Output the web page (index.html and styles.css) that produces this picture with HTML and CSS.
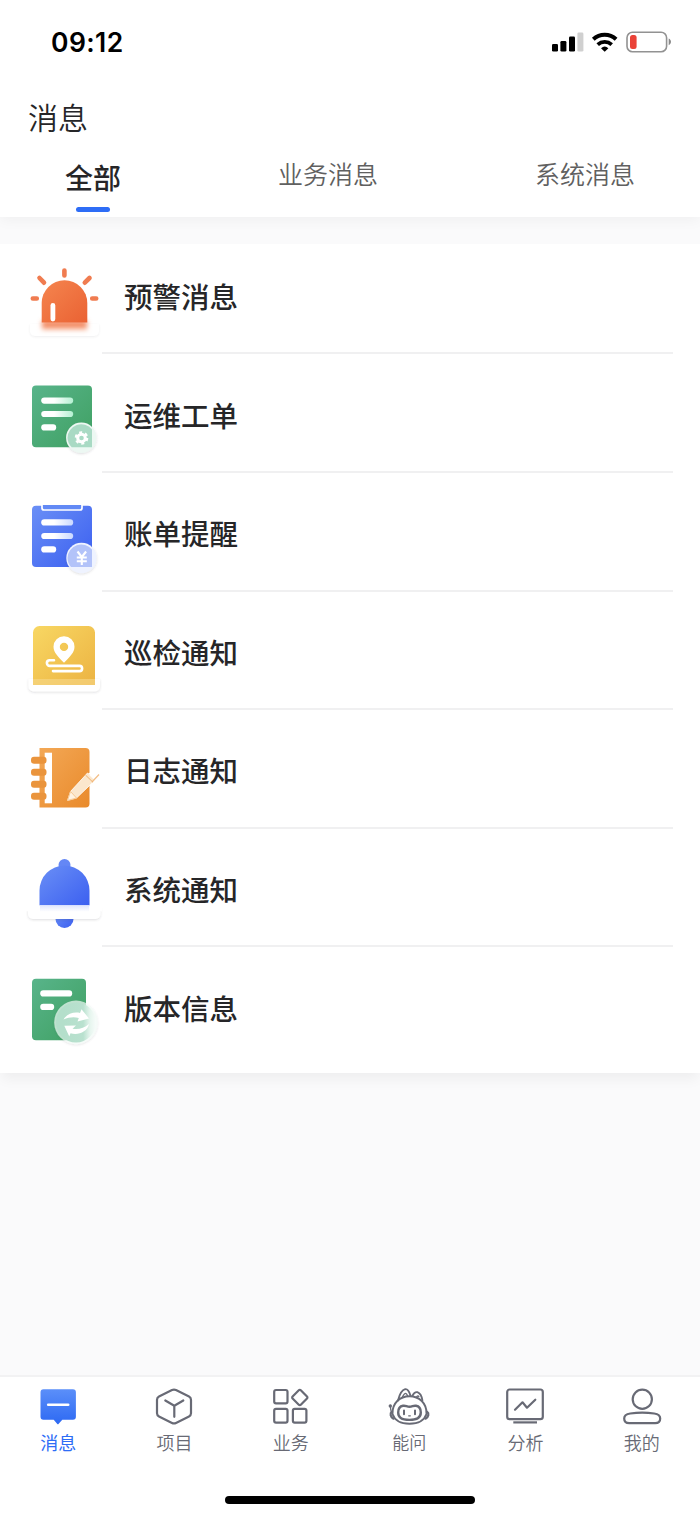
FILE: index.html
```
<!DOCTYPE html>
<html lang="zh-CN">
<head>
  <meta charset="UTF-8" />
  <meta name="viewport" content="width=device-width, initial-scale=1.0"/>
  <title>消息</title>
  <link rel="stylesheet" href="styles.css">
</head>
<body>
  <!-- shared gradients -->
  <svg class="defs" width="0" height="0">
    <defs>
      <linearGradient id="red" x1="0" y1="0" x2="1" y2="1"><stop offset="0" stop-color="#f5854f"/><stop offset="1" stop-color="#ea6233"/></linearGradient>
      <linearGradient id="green" x1="0" y1="0" x2="1" y2="1"><stop offset="0" stop-color="#58b48a"/><stop offset="1" stop-color="#3fa062"/></linearGradient>
      <linearGradient id="blue" x1="0" y1="0" x2="1" y2="1"><stop offset="0" stop-color="#6a8ff6"/><stop offset="1" stop-color="#3b5ff0"/></linearGradient>
      <linearGradient id="yellow" x1="0" y1="0" x2="1" y2="1"><stop offset="0" stop-color="#f8d763"/><stop offset="1" stop-color="#ecb342"/></linearGradient>
      <linearGradient id="orange" x1="0" y1="0" x2="1" y2="1"><stop offset="0" stop-color="#f3a856"/><stop offset="1" stop-color="#e98a2b"/></linearGradient>
      <linearGradient id="lineGreen"><stop offset=".4" stop-color="#fff"/><stop offset="1" stop-color="#b4f0d2"/></linearGradient>
      <linearGradient id="lineBlue"><stop offset=".4" stop-color="#fff"/><stop offset="1" stop-color="#c9d8ff"/></linearGradient>
      <linearGradient id="chat" x1="0" y1="0" x2="0" y2="1"><stop offset="0" stop-color="#5b8ff9"/><stop offset="1" stop-color="#2d69f3"/></linearGradient>
      <linearGradient id="glow" x1="0" y1="0" x2="0" y2="1"><stop offset="0" stop-color="#ee6c3c"/><stop offset="1" stop-color="#f8b090"/></linearGradient>
      <linearGradient id="fade" x1="0" y1="0" x2="0" y2="1"><stop offset="0" stop-color="#dfe5fd"/><stop offset="1" stop-color="#fff"/></linearGradient>
      <linearGradient id="glass"><stop offset=".2" stop-color="#b4dfcb"/><stop offset=".68" stop-color="#b9e1cf"/><stop offset=".85" stop-color="#e6f5ee"/><stop offset="1" stop-color="#f7fcfa"/></linearGradient>
      <filter id="soft" x="-30%" y="-80%" width="160%" height="260%"><feGaussianBlur stdDeviation="2.4"/></filter>
      <filter id="shadow" x="-30%" y="-30%" width="160%" height="180%"><feDropShadow dx="0" dy="1" stdDeviation="1.2" flood-color="#445" flood-opacity=".18"/></filter>
    </defs>
  </svg>

  <header class="header">
    <div class="status">
      <span class="time">09:12</span>
      <svg class="status-icons" width="120" height="24" viewBox="0 0 120 24">
        <rect x="0" y="14" width="6" height="7.5" rx="1.3"/>
        <rect x="8.4" y="11" width="6" height="10.5" rx="1.3"/>
        <rect x="17" y="6.5" width="6" height="15" rx="1.3"/>
        <rect x="25.4" y="2.5" width="6" height="19" rx="1.3" fill="#d0d0d0"/>
        <g fill="none" stroke="#000" stroke-width="4">
          <path d="M41.300 9.200a16.800 16.800 0 0 1 22.800 0"/>
          <path d="M45.700 14.600a10.600 10.600 0 0 1 14 0" stroke-width="3.8"/>
        </g>
        <path d="M49 18.200a5.600 5.600 0 0 1 7.400 0l-3.700 3.600z"/>
        <rect x="75" y="2.200" width="39.600" height="19.600" rx="5.500" fill="none" stroke="#929292" stroke-width="1.600"/>
        <rect x="78" y="5" width="6.600" height="14" rx="2.500" fill="#ea4238"/>
        <path d="M116.700 8.600c3 1.200 3 5.500 0 6.700z" fill="#888"/>
      </svg>
    </div>
    <h1 class="title">消息</h1>
    <nav class="tabs">
      <a class="tab active">全部</a>
      <a class="tab">业务消息</a>
      <a class="tab">系统消息</a>
    </nav>
  </header>

  <main class="list">
    <div class="item">
      <svg class="icon" viewBox="0 0 80 90">
        <g stroke="#f07c50" stroke-width="4.6" stroke-linecap="round">
          <path d="M40.400 18.500v5M15.500 26l4.500 4.700M65.500 26l-4.700 4.700M8.800 46.500h4M68.200 46.500h4"/>
        </g>
        <path d="M6 72h69v7a5 5 0 0 1-5 5H11a5 5 0 0 1-5-5z" fill="#fff" filter="url(#shadow)" opacity=".5"/>
        <rect x="18" y="69" width="45" height="8.500" fill="url(#glow)" filter="url(#soft)"/>
        <path d="M17.700 70.600V51a22.800 22.800 0 0 1 45.600 0v19.600z" fill="url(#red)"/>
        <rect x="26.500" y="51" width="4.800" height="18.500" rx="2.400" fill="#fff"/>
      </svg>
      <span class="label">预警消息</span>
    </div>
    <div class="item">
      <svg class="icon" viewBox="0 0 80 90">
        <rect x="8" y="14.500" width="60" height="61.800" rx="4" fill="url(#green)"/>
        <rect x="17.200" y="26.500" width="32" height="6.200" rx="3.100" fill="url(#lineGreen)"/>
        <rect x="17.200" y="39.900" width="32" height="6.200" rx="3.100" fill="url(#lineGreen)"/>
        <rect x="17.200" y="53.300" width="15" height="6.200" rx="3.100" fill="#fff"/>
        <circle cx="57.300" cy="66.800" r="15.200" fill="#edf8f3" filter="url(#shadow)"/>
        <path d="M43.500 66.800a13.800 13.800 0 0 1 24.500-8.500v18H47.700a13.800 13.800 0 0 1-4.200-9.500z" fill="#a9dac4"/>
        <g fill="none" stroke="#fff">
          <circle cx="57.500" cy="67" r="3.800" stroke-width="3"/>
          <circle cx="57.500" cy="67" r="5.600" stroke-width="2.400" stroke-dasharray="2.930"/>
        </g>
      </svg>
      <span class="label">运维工单</span>
    </div>
    <div class="item">
      <svg class="icon" viewBox="0 0 80 90">
        <rect x="8" y="16.700" width="60" height="61.300" rx="4" fill="url(#blue)"/>
        <path d="M18 16v3a2 2 0 0 0 2 2h36a2 2 0 0 0 2-2v-3" fill="#6289f5" stroke="#fff" stroke-width="1.700"/>
        <rect x="17.200" y="30.300" width="32" height="6.200" rx="3.100" fill="url(#lineBlue)"/>
        <rect x="17.200" y="43.900" width="32" height="6.200" rx="3.100" fill="url(#lineBlue)"/>
        <rect x="17.200" y="57.300" width="15" height="6.200" rx="3.100" fill="#fff"/>
        <circle cx="57.500" cy="69" r="15.200" fill="#eff3ff" filter="url(#shadow)"/>
        <path d="M43.500 69a13.800 13.800 0 0 1 24.500-8.500V78H47a13.800 13.800 0 0 1-3.500-9z" fill="#b3c3f9"/>
        <path d="M53.500 62.500l4.300 5.500 4.300-5.500M57.800 68v8M52.800 68.500h10M52.800 72.300h10" fill="none" stroke="#fff" stroke-width="2.100"/>
      </svg>
      <span class="label">账单提醒</span>
    </div>
    <div class="item">
      <svg class="icon" viewBox="0 0 80 90">
        <path d="M4.500 71H76v7.500a5 5 0 0 1-5 5H9.500a5 5 0 0 1-5-5z" fill="#fff" filter="url(#shadow)"/>
        <path d="M9 77V24.500a6.500 6.500 0 0 1 6.500-6.500h49a6.500 6.500 0 0 1 6.500 6.500V77z" fill="url(#yellow)"/>
        <rect x="9" y="71" width="62" height="6" fill="#f7d88c" opacity=".6"/>
        <path fill="#fff" fill-rule="evenodd" d="M40 28.200a10.500 10.500 0 0 1 10.500 10.500c0 6-5 10.300-10.500 16-5.500-5.700-10.500-10-10.500-16A10.500 10.500 0 0 1 40 28.200zm0 6.500a4.200 4.200 0 1 0 0 8.400 4.200 4.200 0 0 0 0-8.400z"/>
        <path d="M30 52.300h-4.300a2.800 2.800 0 0 0 0 5.600H55.500a2.600 2.600 0 0 1 0 5.200H29" fill="none" stroke="#fff" stroke-width="2.600" stroke-linecap="round"/>
      </svg>
      <span class="label">巡检通知</span>
    </div>
    <div class="item">
      <svg class="icon" viewBox="0 0 80 90">
        <path d="M15.500 22h46a4 4 0 0 1 4 4v51.500a4 4 0 0 1-4 4h-46z" fill="url(#orange)"/>
        <rect x="20.700" y="26.700" width="7.300" height="50.600" fill="#fff"/>
        <g fill="#ea943c">
          <rect x="7" y="30.700" width="15.500" height="7" rx="3"/>
          <rect x="7" y="42.700" width="15.500" height="7" rx="3"/>
          <rect x="7" y="54.700" width="15.500" height="7" rx="3"/>
          <rect x="7" y="66.700" width="15.500" height="7" rx="3"/>
        </g>
        <path d="M64 47l6.500 6.500 4.500-4.500v-3z" fill="#fff"/>
        <path d="M43.500 74.500l3-9L63.500 47l7.500 7.300L52.500 72z" fill="#fbe7cd" stroke="#fff" stroke-width=".8"/>
        <path d="M43.500 74.500l3-9 6 6.500z" fill="#fff3e2" stroke="#f2b976" stroke-width=".7"/>
        <path d="M68 56l7-7.500" stroke="#f3bd84" stroke-width="1.200"/>
        <path d="M61.500 49l7.500 7.300" stroke="#efb272" stroke-width="1"/>
      </svg>
      <span class="label">日志通知</span>
    </div>
    <div class="item">
      <svg class="icon" viewBox="0 0 80 90">
        <circle cx="40.500" cy="74" r="9" fill="url(#blue)"/>
        <circle cx="40.500" cy="20" r="6" fill="#6487f5"/>
        <path d="M15.500 62V45.500a25 25 0 0 1 50 0V62z" fill="url(#blue)"/>
        <path d="M4 63.300h72.500V69a5 5 0 0 1-5 5H9a5 5 0 0 1-5-5z" fill="#fff" filter="url(#shadow)"/>
        <rect x="2" y="60.300" width="76" height="6" fill="#fff"/>
        <rect x="16" y="60.300" width="49" height="6.500" fill="url(#fade)"/>
      </svg>
      <span class="label">系统通知</span>
    </div>
    <div class="item">
      <svg class="icon" viewBox="0 0 80 90">
        <rect x="8" y="14.800" width="54" height="61.500" rx="4" fill="url(#green)"/>
        <rect x="16.200" y="26.300" width="32" height="6.200" rx="3.100" fill="#fff"/>
        <rect x="16.200" y="39.800" width="14" height="6.200" rx="3.100" fill="#fff"/>
        <circle cx="52" cy="58.400" r="21.800" fill="#f1faf6" filter="url(#shadow)" opacity=".7"/>
        <circle cx="52" cy="58.400" r="20" fill="url(#glass)"/>
        <g fill="#fff">
          <path d="M39.500 55.500c3.500-6 11-8 16.500-6.500l1.500-3.800 7.500 9.300-11.500 3 1.300-3.500c-5-1.500-10-.8-15.300 1.500z"/>
          <path d="M65 60c-1.500 8-11 11.500-18.500 9.200l-1.200 3.300-5-10.700 11.700-.3-3.500 3.200c6 1.300 11.500-.7 16.500-4.700z"/>
        </g>
      </svg>
      <span class="label">版本信息</span>
    </div>
  </main>

  <footer class="tabbar">
    <div class="menu">
      <a class="menu-item current">
        <svg class="menu-icon" viewBox="0 0 42 42">
          <path d="M6.500 3.300h29.400a3 3 0 0 1 3 3v24.400a3 3 0 0 1-3 3h-10.600l-3.600 4a1 1 0 0 1-1.600 0l-3.400-4H6.500a3 3 0 0 1-3-3V6.300a3 3 0 0 1 3-3z" fill="url(#chat)" stroke="none"/>
          <path d="M11.200 18.800h20" stroke="#fff" stroke-width="2.600"/>
        </svg>
        <span>消息</span>
      </a>
      <a class="menu-item">
        <svg class="menu-icon" viewBox="0 0 42 42">
          <path d="M19 4.100a4.500 4.500 0 0 1 4 0l13 6.400a3.600 3.600 0 0 1 2 3.200v13.600a3.600 3.600 0 0 1-2 3.200l-13 6.400a4.500 4.500 0 0 1-4 0l-13-6.400a3.600 3.600 0 0 1-2-3.200V13.700a3.600 3.600 0 0 1 2-3.200z"/>
          <path d="M12.300 14.500l9 5.300 9-5.300M21.300 19.800v11"/>
        </svg>
        <span>项目</span>
      </a>
      <a class="menu-item">
        <svg class="menu-icon" viewBox="0 0 42 42">
          <rect x="4.200" y="4" width="13.300" height="13.400" rx="1.800"/>
          <rect x="4.200" y="22.800" width="13.300" height="13.800" rx="1.800"/>
          <rect x="22.900" y="22.800" width="13.500" height="13.800" rx="1.800"/>
          <path d="M28.800 4.300a1.400 1.400 0 0 1 2 0l6.200 6.200a1.400 1.400 0 0 1 0 2l-6.200 6.200a1.400 1.400 0 0 1-2 0l-6.200-6.200a1.400 1.400 0 0 1 0-2z"/>
        </svg>
        <span>业务</span>
      </a>
      <a class="menu-item small">
        <svg class="menu-icon" viewBox="0 0 42 42">
          <g stroke-width="1.900">
            <path d="M10 14.500C11.500 8.500 14 4 17.200 3.200c2.800-.5 4.300 3.200 5.300 6.300"/>
            <path d="M14.500 10.800c1-2 2-3.400 3.200-3.400.9 0 1.300 1 1.700 2.100" stroke-width="1.400"/>
            <path d="M24.500 9.600c1.300-2.600 3-3.900 4.900-3.400 2.800 1 4.400 4.300 5 8.300"/>
            <path d="M28.800 10.500c.9-.8 1.500-.6 2 .2" stroke-width="1.400"/>
            <path d="M4.500 28C4 17 12 10.200 21.500 10.200S39 17 38.500 28c-2.500 7.300-9 9.800-17 9.800S7 35.300 4.500 28z"/>
            <path d="M3.800 26c-2 1.300-1.500 5 1.700 6.700M39.200 26c2 1.300 1.500 5-1.700 6.700" stroke-width="2.200"/>
            <path d="M3.400 26.500c-.7-2.500-1-5-1-7" stroke-width="1.300"/>
          </g>
          <circle cx="2.300" cy="20" r="1.700" fill="#686a75" stroke="none"/>
          <path d="M15 19.800c3-.5 3.500 1 6.500 1s3.500-1.500 6.500-1c3.800.6 4.800 2.800 4.800 6.700 0 5-3 7.400-11.300 7.400s-11.300-2.400-11.300-7.400c0-3.900 1-6.100 4.800-6.700z" stroke-width="2.400"/>
          <path d="M16 24.500v3.700M27 24.500v3.700" stroke-width="2"/>
          <path d="M20.700 29.800h1.600" stroke-width="1.300"/>
        </svg>
        <span>能问</span>
      </a>
      <a class="menu-item">
        <svg class="menu-icon" viewBox="0 0 42 42">
          <rect x="3.200" y="3.500" width="35.600" height="29.700" rx="2.500"/>
          <path d="M11 23.700l7.500-7.400 4.500 5.400 8.300-8"/>
          <path d="M9.300 36.400h23.700" stroke-linecap="butt"/>
        </svg>
        <span>分析</span>
      </a>
      <a class="menu-item">
        <svg class="menu-icon" viewBox="0 0 42 42">
          <circle cx="21.300" cy="13.200" r="9.600"/>
          <path d="M3.200 32.500c0-3.500 2.500-4.500 6-5a83 83 0 0 1 24 0c3.500.5 6 1.500 6 5 0 3.200-2 4.700-5 4.700H8.200c-3 0-5-1.500-5-4.700z"/>
        </svg>
        <span>我的</span>
      </a>
    </div>
    <div class="home-bar"></div>
  </footer>
</body>
</html>
```
FILE: styles.css
```
* {
  box-sizing: border-box;
}
body {
  margin: 0;
  height: 1518px;
  display: flex;
  flex-direction: column;
  background: #fafafb;
  color: #262628;
  font-family: "Noto Sans CJK SC", sans-serif;
  overflow: hidden;
}
.defs {
  position: absolute;
}
.header {
  height: 217px;
  flex: none;
  background: #fff;
  box-shadow: 0 2px 14px rgba(0, 0, 0, 0.05);
}
.status {
  height: 84px;
  padding: 0 28px 0 51px;
  display: flex;
  align-items: center;
  justify-content: space-between;
}
.time {
  font-family: Inter, sans-serif;
  font-size: 26.5px;
  font-weight: 600;
  letter-spacing: 0.4px;
  color: #000;
}
.title {
  margin: 0;
  padding: 9px 0 0 28px;
  font-size: 30px;
  font-weight: 350;
  line-height: 46px;
}
.tabs {
  display: flex;
  justify-content: space-between;
  padding: 16px 65px 0;
}
.tab {
  font-size: 25px;
  line-height: 36px;
  font-weight: 350;
  color: #606060;
}
.tab.active {
  display: flex;
  flex-direction: column;
  align-items: center;
  font-size: 28px;
  line-height: 44px;
  font-weight: 500;
  color: #262628;
}
.tab.active::after {
  content: "";
  width: 34px;
  height: 5px;
  margin-top: 8px;
  border-radius: 3px;
  background: #2e6df6;
}
.list {
  margin-top: 27px;
  height: 829px;
  flex: none;
  background: #fff;
  box-shadow: 0 8px 12px -2px rgba(0, 0, 0, 0.05);
}
.item {
  position: relative;
  height: 118.6px;
  display: flex;
  align-items: center;
  padding: 6px 0 0 24px;
}
.item:first-child {
  margin-top: -9.2px;
}
.item:not(:last-child)::after {
  content: "";
  position: absolute;
  left: 102px;
  right: 27px;
  bottom: -1px;
  height: 2px;
  background: #f0f0f1;
}
.icon {
  width: 80px;
  height: 90px;
  flex: none;
}
.label {
  margin-left: 20px;
  padding-bottom: 3px;
  font-size: 28.5px;
  font-weight: 500;
}
.tabbar {
  margin-top: auto;
  height: 143px;
  flex: none;
  border-top: 2px solid #f2f2f3;
  background: #fff;
  display: flex;
  flex-direction: column;
  align-items: center;
}
.menu {
  display: flex;
  width: 100%;
  height: 119px;
}
.menu-item {
  flex: 1;
  display: flex;
  flex-direction: column;
  align-items: center;
  padding-top: 9px;
  font-size: 18px;
  line-height: 26px;
  font-weight: 350;
  color: #686a75;
}
.menu-item.small {
  padding-left: 2px;
  font-size: 17px;
}
.menu-item.current {
  color: #2e6df6;
  font-weight: 400;
}
.menu-icon {
  width: 42px;
  height: 42px;
  margin-bottom: 1px;
  fill: none;
  stroke: #686a75;
  stroke-width: 2.2;
  stroke-linecap: round;
  stroke-linejoin: round;
}
.home-bar {
  width: 250px;
  height: 8px;
  border-radius: 4px;
  background: #000;
}
```
